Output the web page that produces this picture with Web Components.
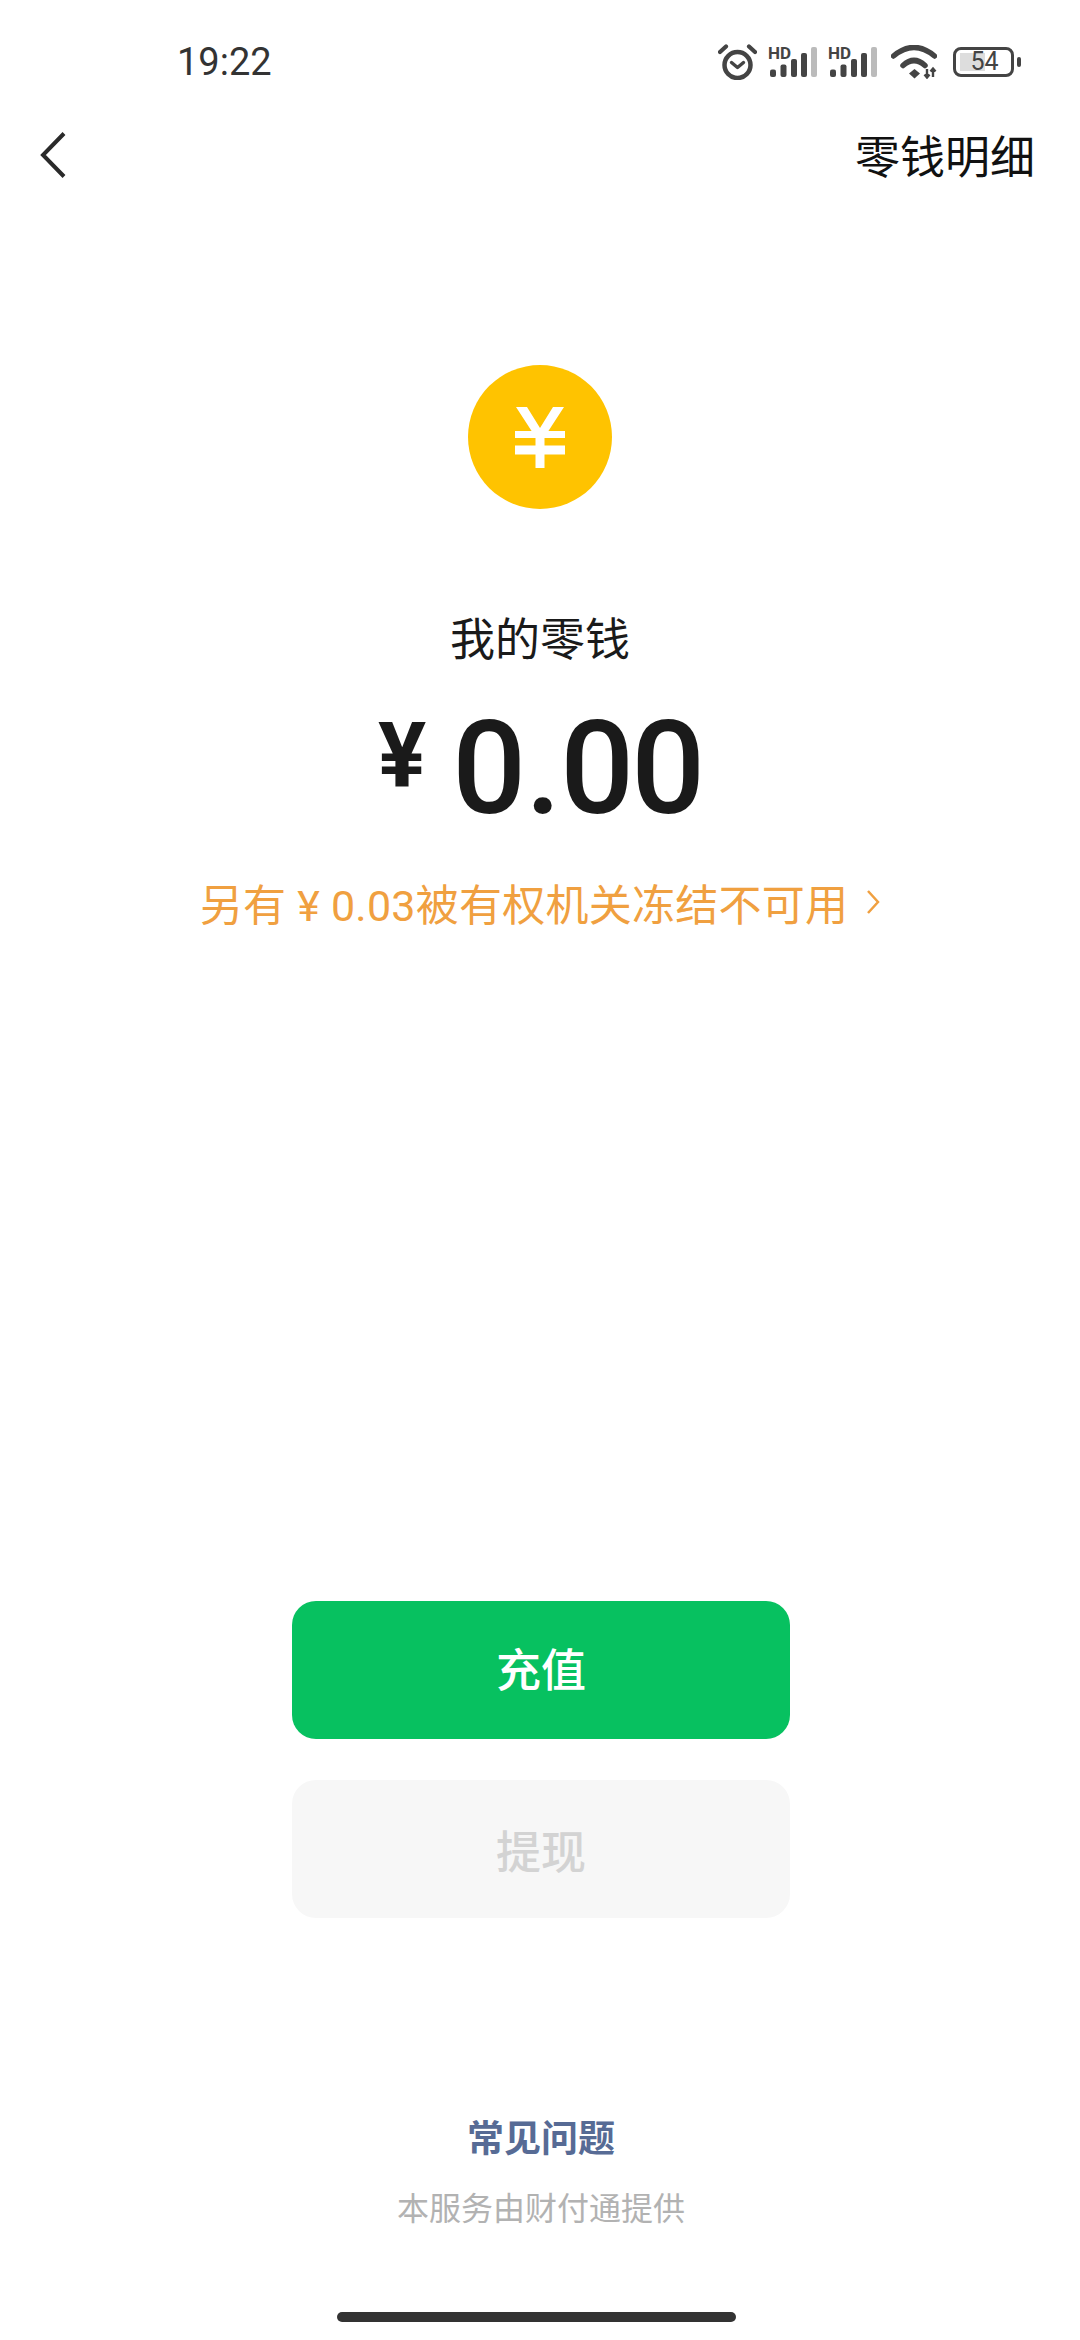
<!DOCTYPE html>
<html lang="zh">
<head>
<meta charset="utf-8">
<title>我的零钱</title>
<style>
  html, body { margin: 0; background: #fff; }
  body { font-family: "Noto Sans CJK SC", sans-serif; }
</style>
</head>
<body>
<wx-change-page>
  <wx-status-bar slot="status" time="19:22" battery="54"></wx-status-bar>
  <wx-nav-bar slot="nav">零钱明细</wx-nav-bar>
  <wx-balance slot="balance" label="我的零钱">另有 ¥ 0.03被有权机关冻结不可用</wx-balance>
  <wx-button slot="actions" variant="primary">充值</wx-button>
  <wx-button slot="actions" variant="disabled">提现</wx-button>
  <wx-footer slot="footer" link="常见问题">本服务由财付通提供</wx-footer>
</wx-change-page>

<template id="page-template">
  <style>
    :host { display: flex; flex-direction: column; width: 1080px; height: 2340px; background: #fff; overflow: hidden; }
    ::slotted(*) { flex-shrink: 0; }
    .actions { display: flex; flex-direction: column; align-items: center; gap: 41px; margin-top: 669px; padding-left: 2px; }
    .footer { margin-top: 193px; padding-left: 2px; }
    .home { flex-shrink: 0; width: 399px; height: 10px; border-radius: 5px; background: #333; margin: 81px 0 0 337px; }
  </style>
  <slot name="status"></slot>
  <slot name="nav"></slot>
  <slot name="balance"></slot>
  <div class="actions"><slot name="actions"></slot></div>
  <div class="footer"><slot name="footer"></slot></div>
  <div class="home"></div>
</template>

<template id="status-template">
  <style>
    :host { display: flex; align-items: center; height: 124px; padding: 0 59px 0 177px; box-sizing: border-box; color: #333; }
    .time { font: 400 38px/1 Roboto, sans-serif; }
    .icons { display: flex; align-items: center; margin-left: auto; }
    svg { display: block; }
    .alarm { margin-right: 11px; }
    .signal { display: grid; width: 49px; height: 30px; margin-right: 11px; }
    .signal > * { grid-area: 1 / 1; }
    .hd { font: 700 17px/13px Roboto, sans-serif; color: #444; align-self: start; }
    .wifi { margin: 0 16px 0 3px; }
    .battery { display: flex; align-items: center; gap: 3px; }
    .cell { display: grid; width: 61px; height: 30px; box-sizing: border-box; border: 3px solid #444; border-radius: 8px; padding: 3px 4px; }
    .cell > * { grid-area: 1 / 1; }
    .level { width: 25px; background: #ddd; }
    .num { font: 400 25px/18px Roboto, sans-serif; color: #444; text-align: center; padding-left: 2px; }
    .nub { width: 4px; height: 10px; border-radius: 2px; background: #444; }
  </style>
  <span class="time"></span>
  <div class="icons">
    <svg class="alarm" width="39" height="36" viewBox="0 0 39 36" fill="none" stroke="#444" stroke-linecap="round" stroke-linejoin="round">
      <circle cx="19.5" cy="21" r="13" stroke-width="4.5"/>
      <path d="M13.5 18.5l6 5 6-5" stroke-width="3.4"/>
      <path d="M2 8L8 2.500M37 8L31 2.500" stroke-width="4.2"/>
    </svg>
    <div class="signal">
      <svg width="49" height="30" viewBox="0 0 49 30">
        <rect x="2" y="22.5" width="6" height="7.5" rx="2" fill="#444"/>
        <rect x="12.5" y="17.5" width="6" height="12.5" rx="2" fill="#444"/>
        <rect x="23" y="12" width="6" height="18" rx="2" fill="#444"/>
        <rect x="33" y="6" width="6" height="24" rx="2" fill="#444"/>
        <rect x="43" y="0" width="6" height="30" rx="2" fill="#bbb"/>
      </svg>
      <span class="hd">HD</span>
    </div>
    <div class="signal">
      <svg width="49" height="30" viewBox="0 0 49 30">
        <rect x="2" y="22.5" width="6" height="7.5" rx="2" fill="#444"/>
        <rect x="12.5" y="17.5" width="6" height="12.5" rx="2" fill="#444"/>
        <rect x="23" y="12" width="6" height="18" rx="2" fill="#444"/>
        <rect x="33" y="6" width="6" height="24" rx="2" fill="#444"/>
        <rect x="43" y="0" width="6" height="30" rx="2" fill="#bbb"/>
      </svg>
      <span class="hd">HD</span>
    </div>
    <svg class="wifi" width="46" height="34" viewBox="0 0 46 34" fill="none" stroke="#444" stroke-linecap="round">
      <path d="M2.5 11Q23 -6 43.5 11" stroke-width="5.5"/>
      <path d="M12 20.500Q23 10.500 34 20.500" stroke-width="5.500"/>
      <path d="M18 28.500L23.500 24L29 28.500L23.500 33.500Z" fill="#444" stroke="none"/>
      <path d="M36 24v8M33.500 29.500l2.500 3 2.500-3M42 32v-8M39.500 26.500l2.500-3 2.500 3" stroke-width="2.400" stroke-linecap="butt"/>
    </svg>
    <div class="battery">
      <div class="cell">
        <div class="level"></div>
        <span class="num"></span>
      </div>
      <div class="nub"></div>
    </div>
  </div>
</template>

<template id="nav-template">
  <style>
    :host { display: flex; align-items: center; justify-content: space-between; height: 62px; padding: 0 45px 0 40px; color: #111; }
    svg { display: block; }
    .title { font-size: 45px; line-height: 62px; }
  </style>
  <svg width="26" height="46" viewBox="0 0 26 46" fill="none" stroke="#2a2a2a" stroke-width="4">
    <path d="M24 1.5L3 23l21 21.5"/>
  </svg>
  <span class="title"><slot></slot></span>
</template>

<template id="balance-template">
  <style>
    :host { display: flex; flex-direction: column; align-items: center; }
    .coin { display: flex; align-items: center; justify-content: center; width: 144px; height: 144px; margin-top: 179px; border-radius: 50%; background: #ffc300; }
    svg { display: block; }
    .label { margin-top: 98px; font-size: 45px; line-height: 60px; color: #1a1a1a; }
    .amount { display: flex; align-items: flex-start; height: 120px; margin-top: 42px; color: #1a1a1a; font-family: Roboto, sans-serif; }
    .cur { font-size: 90px; font-weight: 700; line-height: 96px; margin-right: 26px; }
    .num { font-size: 130px; font-weight: 500; line-height: 120px; letter-spacing: -3px; }
    .dot { margin: 0 2px; }
    .notice { display: flex; align-items: center; gap: 18px; margin-top: 43px; height: 60px; font-size: 43px; letter-spacing: .25px; color: #f0a040; font-family: Roboto, "Noto Sans CJK SC", sans-serif; white-space: nowrap; }
  </style>
  <div class="coin">
    <svg width="50" height="61" viewBox="0 0 50 61" fill="#fff">
      <path d="M1 0H12L25 21L38 0H49L29.5 30V61H20.5V30Z"/>
      <rect y="24" width="50" height="7"/>
      <rect y="38.5" width="50" height="9"/>
    </svg>
  </div>
  <div class="label"></div>
  <div class="amount"><span class="cur">¥</span><span class="num">0<span class="dot">.</span>00</span></div>
  <div class="notice">
    <span><slot></slot></span>
    <svg width="14" height="26" viewBox="0 0 14 26" fill="none" stroke="#f0a040" stroke-width="2.5"><path d="M2 2l10 11L2 24"/></svg>
  </div>
</template>

<template id="button-template">
  <style>
    :host { display: flex; align-items: center; justify-content: center; width: 498px; height: 138px; box-sizing: border-box; border-radius: 24px; font-size: 45px; font-weight: 500; }
    :host([variant="primary"]) { background: #07c160; color: #fff; padding-bottom: 6px; }
    :host([variant="disabled"]) { background: #f7f7f7; color: #d3d3d3; }
  </style>
  <slot></slot>
</template>

<template id="footer-template">
  <style>
    :host { display: flex; flex-direction: column; align-items: center; }
    .link { font-size: 37px; font-weight: 700; line-height: 50px; color: #576b95; }
    .note { font-size: 32px; line-height: 50px; margin-top: 20px; color: #b2b2b2; }
  </style>
  <span class="link"></span>
  <span class="note"><slot></slot></span>
</template>

<script>
// template を shadow root に複製する共通処理
function mount(host, id) {
  const root = host.attachShadow({ mode: "open" });
  root.appendChild(document.getElementById(id).content.cloneNode(true));
  return root;
}

class WxChangePage extends HTMLElement {
  constructor() {
    super();
    mount(this, "page-template");
  }
}

class WxStatusBar extends HTMLElement {
  constructor() {
    super();
    this.root = mount(this, "status-template");
  }

  connectedCallback() {
    this.root.querySelector(".time").textContent = this.getAttribute("time");
    this.root.querySelector(".num").textContent = this.getAttribute("battery");
  }
}

class WxNavBar extends HTMLElement {
  constructor() {
    super();
    mount(this, "nav-template");
  }
}

class WxBalance extends HTMLElement {
  constructor() {
    super();
    this.root = mount(this, "balance-template");
  }

  connectedCallback() {
    this.root.querySelector(".label").textContent = this.getAttribute("label");
  }
}

class WxButton extends HTMLElement {
  constructor() {
    super();
    mount(this, "button-template");
  }
}

class WxFooter extends HTMLElement {
  constructor() {
    super();
    this.root = mount(this, "footer-template");
  }

  connectedCallback() {
    this.root.querySelector(".link").textContent = this.getAttribute("link");
  }
}

customElements.define("wx-change-page", WxChangePage);
customElements.define("wx-status-bar", WxStatusBar);
customElements.define("wx-nav-bar", WxNavBar);
customElements.define("wx-balance", WxBalance);
customElements.define("wx-button", WxButton);
customElements.define("wx-footer", WxFooter);
</script>
</body>
</html>
